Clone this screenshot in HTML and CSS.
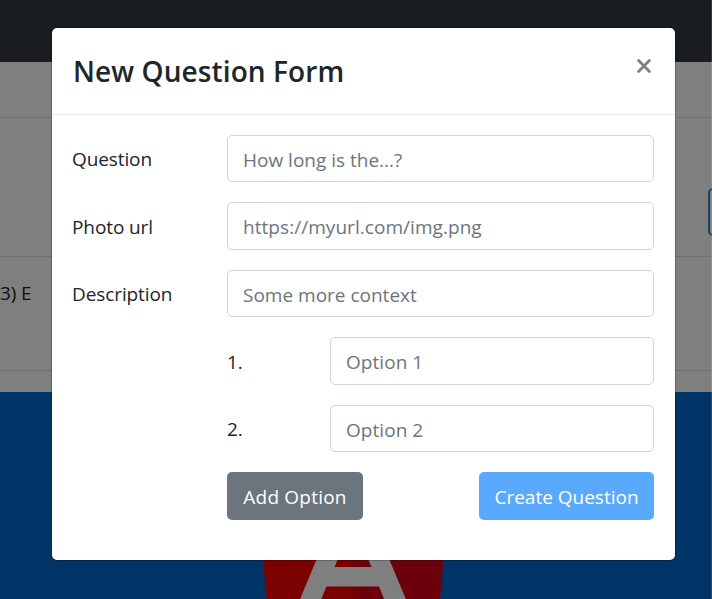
FILE: index.html
```html
<!DOCTYPE html>
<html lang="en">
<head>
<meta charset="utf-8">
<title>New Question Form</title>
<link rel="stylesheet" href="styles.css">
</head>
<body>
<div class="page">
  <nav class="navbar"></nav>
  <div class="band band-title"></div>
  <div class="band band-actions"><span class="outline-button"></span></div>
  <div class="band band-text">3) E</div>
  <div class="band-gap"></div>
  <div class="hero">
    <svg class="logo" viewBox="250 392 206 240" width="206" height="240">
      <path fill="#f60000" d="M247 420 353 392V632H270L263 560Z"/>
      <path fill="#d80016" d="M353 392 459 420 443.5 560 437 632H353Z"/>
      <path fill="#fff" fill-rule="evenodd" d="M353 472 283 640H304L326.500 586.500H379L401 640H423L389.500 560ZM353 523 371.500 567H334.500Z"/>
    </svg>
  </div>
</div>
<div class="backdrop"></div>
<main class="modal">
  <header class="modal-header">
    <h1 class="modal-title">New Question Form</h1>
    <button class="close" aria-label="Close"><svg width="16" height="16" viewBox="0 0 16 16"><path d="M2.600 2.600 13.400 13.400M13.400 2.600 2.600 13.400" stroke="#7f7f7f" stroke-width="2.800" stroke-linecap="round"/></svg></button>
  </header>
  <form class="modal-body">
    <div class="row"><label for="q">Question</label><input id="q" placeholder="How long is the...?"></div>
    <div class="row"><label for="p">Photo url</label><input class="wide" id="p" placeholder="https://myurl.com/img.png"></div>
    <div class="row"><label for="d">Description</label><input id="d" placeholder="Some more context"></div>
    <div class="row option"><label for="o1">1.</label><input class="wide" id="o1" placeholder="Option 1"></div>
    <div class="row option"><label for="o2">2.</label><input class="wide" id="o2" placeholder="Option 2"></div>
    <div class="actions">
      <button type="button" class="button secondary">Add Option</button>
      <button type="button" class="button primary">Create Question</button>
    </div>
  </form>
</main>
</body>
</html>
```

FILE: styles.css
```css
* { box-sizing: border-box; }
html, body { height: 100%; }
body {
  margin: 0;
  overflow: hidden;
  position: relative;
  font: 19px/30px "Open Sans", "Noto Sans", sans-serif;
  letter-spacing: -0.1px;
  color: #212529;
}
.page { height: 599px; overflow: hidden; background: #fff; }
.navbar { height: 62px; background: #343a40; }
.band { border-bottom: 1px solid #dedede; }
.band-title { height: 56px; }
.band-actions { height: 139px; padding-top: 70px; display: flex; justify-content: flex-end; }
.outline-button { width: 30px; height: 48px; margin-right: -26px; border: 2px solid #3f85c5; border-radius: 5px; }
.band-text { height: 114px; padding-top: 21px; }
.band-gap { height: 21px; }
.hero { height: 207px; overflow: hidden; background: #0068cc; padding-left: 250px; }
.logo { display: block; }
.backdrop { position: absolute; inset: 0; background: rgba(0, 0, 0, .5); border-right: 1px solid rgba(255, 255, 255, .12); }
.modal {
  position: absolute;
  left: 52px;
  top: 28px;
  width: 623px;
  height: 532px;
  background: #fff;
  border-radius: 5px;
  box-shadow: 0 0 0 1px rgba(0, 0, 0, .2);
}
.modal-header {
  height: 87px;
  padding: 20px;
  border-bottom: 1px solid #e9ecef;
  display: flex;
  justify-content: space-between;
}
.modal-title { margin: 4px 0 0 1px; font-size: 28px; line-height: 38px; font-weight: 600; letter-spacing: 0.1px; white-space: nowrap; }
.close { width: 16px; height: 16px; padding: 0; margin: 10px 3px 0 0; border: 0; background: none; }
.close svg { display: block; }
.modal-body { padding: 20px; display: grid; gap: 20px; }
.row { display: grid; grid-template-columns: 155px 427px; height: 47.450px; }
.row.option { grid-template-columns: 103px 324px; margin-left: 155px; }
label { padding-top: 9.300px; white-space: nowrap; }
input {
  width: 100%;
  height: 47.450px;
  padding: 2.400px 15px 0;
  border: 1px solid #ced4da;
  border-radius: 5px;
  background: #fff;
  font: inherit;
  letter-spacing: 0;
  outline: 0;
}
input.wide { letter-spacing: 0.050px; }
input::placeholder { color: #6c757d; opacity: 1; }
.actions { display: flex; justify-content: space-between; margin-left: 155px; width: 427px; }
.button {
  height: 47.450px;
  padding: 2px 0 0;
  border: 0;
  border-radius: 5px;
  color: #fff;
  font: inherit;
  letter-spacing: 0;
  white-space: nowrap;
}
.secondary { width: 136px; background: #6c757d; letter-spacing: 0.200px; }
.primary { width: 175px; background: #59a9ff; }
```
